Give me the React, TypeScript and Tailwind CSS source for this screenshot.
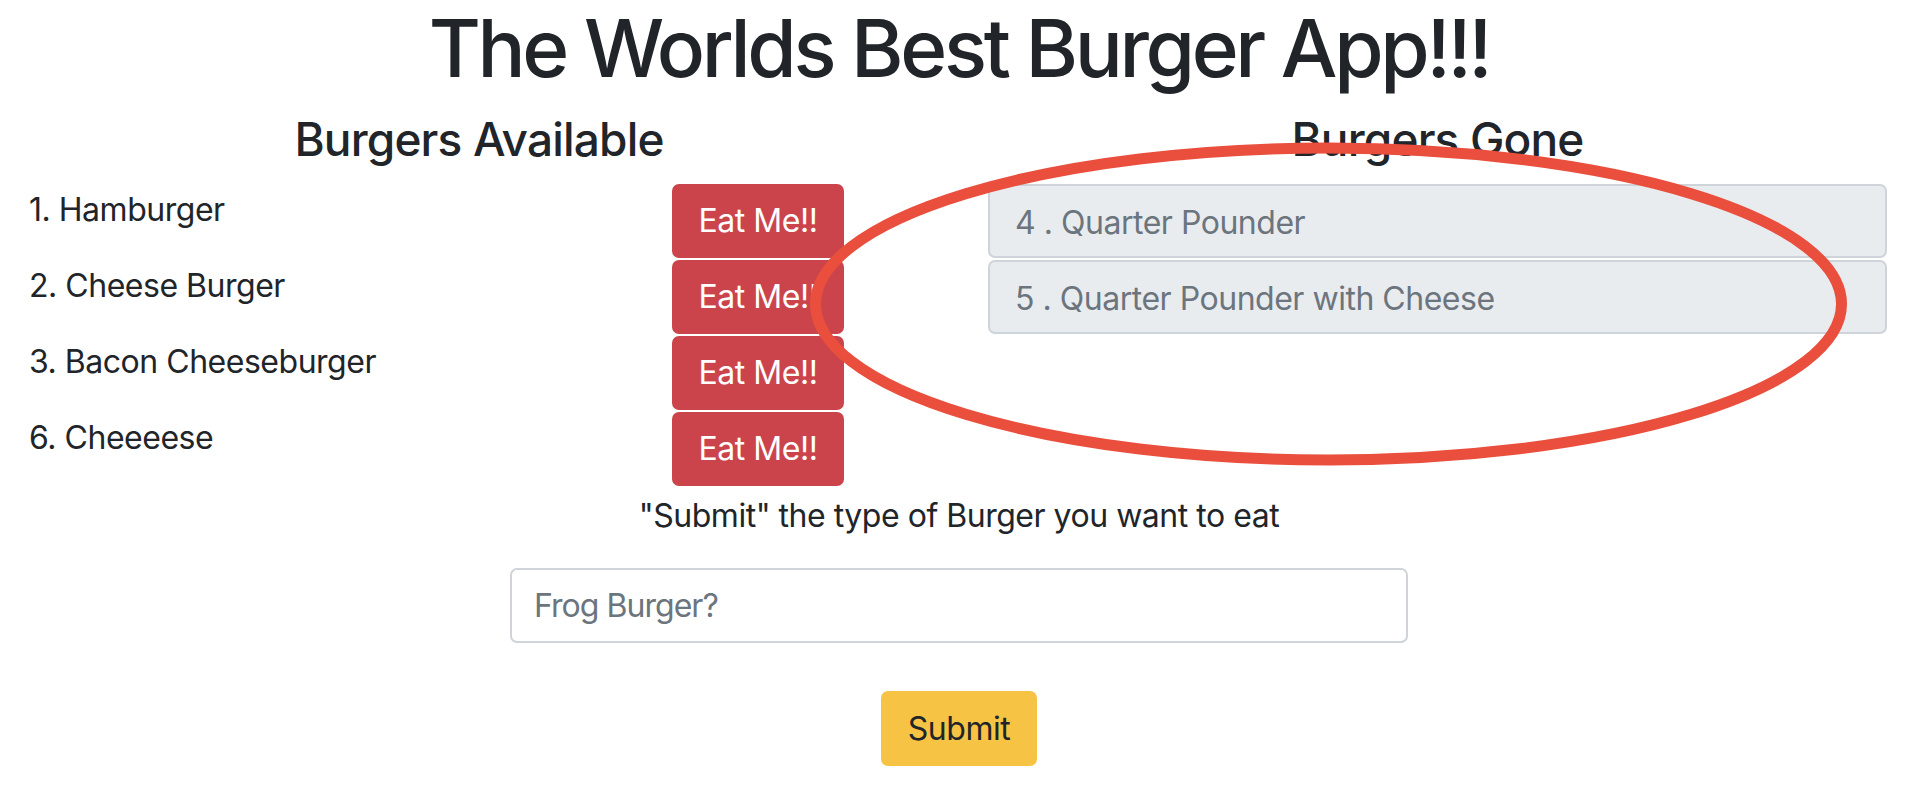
import React from "react";

const available = [
  { id: 1, name: "Hamburger" },
  { id: 2, name: "Cheese Burger" },
  { id: 3, name: "Bacon Cheeseburger" },
  { id: 6, name: "Cheeeese" },
];

const gone = [
  { id: 4, name: "Quarter Pounder" },
  { id: 5, name: "Quarter Pounder with Cheese" },
];

export default function App() {
  return (
    <div className="relative w-full min-h-[794px] bg-white text-[#212529] font-['Inter','Noto_Sans',sans-serif] tracking-[-0.03em]">
      <h1 className="text-center text-[80px] leading-[96px] font-medium tracking-[-0.042em] mb-4">
        The Worlds Best Burger App!!!
      </h1>

      <div className="flex">
        {/* Available */}
        <div className="w-1/2 pl-[29px] pr-[30px]">
          <h2 className="text-center text-[46px] leading-[55px] font-medium tracking-[-0.018em] mb-[17px]">
            Burgers Available
          </h2>
          {available.map((b) => (
            <div key={b.id} className="flex">
              <div className="w-[643px] pt-[2px] text-[32px] leading-[48px]">
                {b.id}. {b.name}
              </div>
              <button className="w-[172px] h-[74px] mb-[2px] rounded-[7px] bg-[#cc444b] text-white text-[32px] leading-[48px]">
                Eat Me!!
              </button>
            </div>
          ))}
        </div>

        {/* Gone */}
        <div className="w-1/2 pl-[29px] pr-[31px]">
          <h2 className="text-center text-[46px] leading-[55px] font-medium tracking-[-0.018em] mb-[17px]">
            Burgers Gone
          </h2>
          {gone.map((b) => (
            <div
              key={b.id}
              className="h-[74px] mb-[2px] flex items-center pt-[3px] px-[25px] rounded-[7px] border-2 border-[#ced4da] bg-[#e9ecef] text-[#6c757d] text-[32px]"
            >
              {b.id} . {b.name}
            </div>
          ))}
        </div>
      </div>

      <div className="flex flex-col items-center">
        <p className="mt-[4px] text-[32px] leading-[48px]">"Submit" the type of Burger you want to eat</p>
        <input
          type="text"
          placeholder="Frog Burger?"
          className="mt-[28px] w-[898px] h-[75px] px-[22px] rounded-[7px] border-2 border-[#ced4da] text-[32px] tracking-[-0.03em] placeholder:text-[#6c757d] outline-none"
        />
        <button className="mt-[48px] h-[75px] px-[27px] rounded-[7px] bg-[#f6c344] text-[#212529] text-[32px]">
          Submit
        </button>
      </div>

      {/* annotation ring */}
      <svg className="absolute left-0 top-0 pointer-events-none" width="1918" height="794">
        <ellipse cx="1328.5" cy="304" rx="513" ry="156" fill="none" stroke="#ea4f3d" strokeWidth="11" />
      </svg>
    </div>
  );
}
